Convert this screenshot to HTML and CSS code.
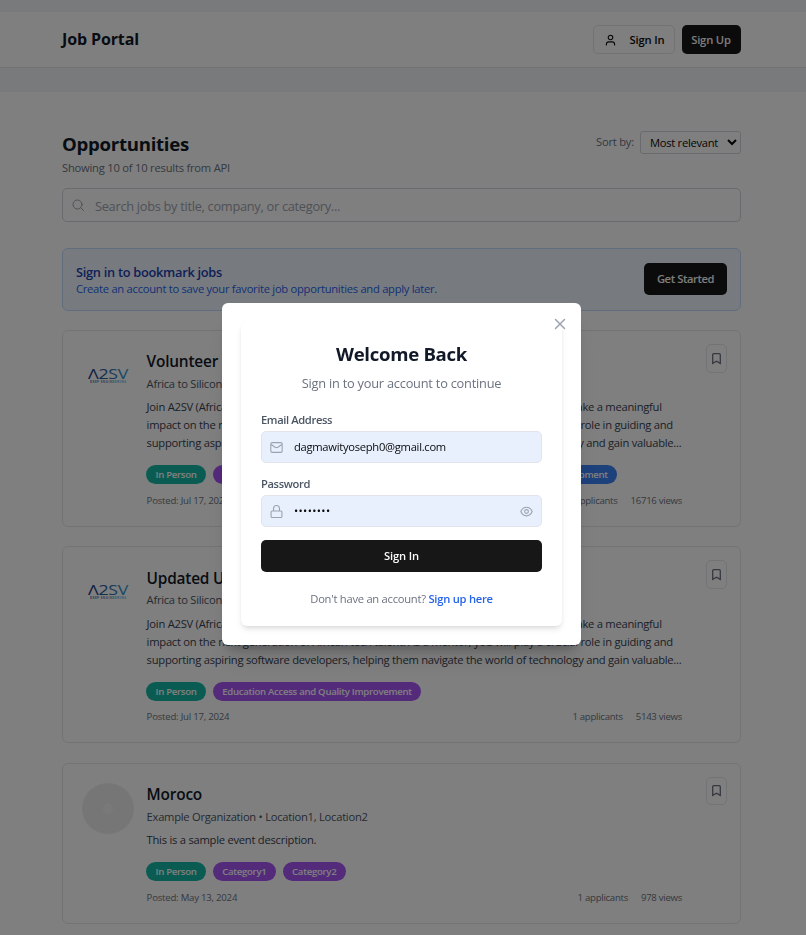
FILE: index.html
```html
<!DOCTYPE html>
<html lang="en">
<head>
<meta charset="utf-8">
<title>Job Portal</title>
<link rel="stylesheet" href="styles.css">
</head>
<body>
<svg class="sprite" aria-hidden="true">
  <defs>
    <linearGradient id="logo-fill" x1="0" y1="0" x2="1" y2="0">
      <stop offset="0" stop-color="#1e2f78"/>
      <stop offset="1" stop-color="#38a4d8"/>
    </linearGradient>
    <symbol id="bookmark" viewBox="0 0 24 24">
      <path d="M19 21l-7-4-7 4V5a2 2 0 0 1 2-2h10a2 2 0 0 1 2 2z" fill="none" stroke="currentColor" stroke-width="2.4"/>
    </symbol>
    <symbol id="a2sv" viewBox="0 0 52 52">
      <g fill="url(#logo-fill)" font-family="Open Sans, sans-serif">
        <text x="6" y="29" font-size="14.500" font-weight="500" textLength="40" lengthAdjust="spacingAndGlyphs">Λ2SV</text>
        <text x="8" y="33.200" font-size="3" font-weight="700" opacity=".75" textLength="36">DEEP ENGINEERING</text>
      </g>
    </symbol>
  </defs>
</svg>

<div class="page">
  <header class="header">
    <div class="brand">Job Portal</div>
    <nav class="nav">
      <button class="btn btn-outline">
        <svg class="icon-user" viewBox="0 0 24 24" fill="none" stroke="currentColor" stroke-width="2.4" stroke-linecap="round"><path d="M21 23v-2a5 5 0 0 0-5-5H8a5 5 0 0 0-5 5v2"/><circle cx="12" cy="6.500" r="5"/></svg>
        <span>Sign In</span>
      </button>
      <button class="btn btn-dark btn-signup">Sign Up</button>
    </nav>
  </header>

  <main class="main">
    <div class="heading">
      <div>
        <h1>Opportunities</h1>
        <p class="count">Showing 10 of 10 results from API</p>
      </div>
      <label class="sort">Sort by: <select><option>Most relevant</option></select></label>
    </div>

    <div class="search">
      <svg viewBox="0 0 24 24" fill="none" stroke="currentColor" stroke-width="2" stroke-linecap="round"><circle cx="11" cy="11" r="9"/><path d="M23 23l-5.400-5.400"/></svg>
      <input type="text" placeholder="Search jobs by title, company, or category...">
    </div>

    <section class="banner">
      <div class="banner-text">
        <h2>Sign in to bookmark jobs</h2>
        <p>Create an account to save your favorite job opportunities and apply later.</p>
      </div>
      <button class="btn btn-dark btn-large">Get Started</button>
    </section>

    <section class="jobs">
      <article class="card">
        <svg class="avatar"><use href="#a2sv"/></svg>
        <div class="card-body">
          <h3>Volunteer Software Mentor</h3>
          <p class="company">Africa to Silicon Valley • Addis Ababa</p>
          <p class="desc"><span>Join A2SV (Africa to Silicon Valley) as a mentor for all students, share experience, and make a meaningful</span><span>impact on the next generation of African tech talent. As a mentor, you will play a crucial role in guiding and</span><span>supporting aspiring software developers, helping them navigate the world of technology and gain valuable...</span></p>
          <div class="tags"><span class="tag teal">In Person</span><span class="tag purple">Education Access and Quality Improvement</span><span class="tag blue">Workforce and Economic Development</span></div>
          <div class="meta"><span>Posted: Jul 17, 2024</span><span class="stats"><span>1 applicants</span><span>16716 views</span></span></div>
        </div>
        <button class="save" aria-label="Bookmark"><svg><use href="#bookmark"/></svg></button>
      </article>

      <article class="card">
        <svg class="avatar"><use href="#a2sv"/></svg>
        <div class="card-body">
          <h3>Updated Updated Mentor</h3>
          <p class="company">Africa to Silicon Valley • Addis Ababa</p>
          <p class="desc"><span>Join A2SV (Africa to Silicon Valley) as a mentor for all students, share experience, and make a meaningful</span><span>impact on the next generation of African tech talent. As a mentor, you will play a crucial role in guiding and</span><span>supporting aspiring software developers, helping them navigate the world of technology and gain valuable...</span></p>
          <div class="tags"><span class="tag teal">In Person</span><span class="tag purple">Education Access and Quality Improvement</span></div>
          <div class="meta"><span>Posted: Jul 17, 2024</span><span class="stats"><span>1 applicants</span><span>5143 views</span></span></div>
        </div>
        <button class="save" aria-label="Bookmark"><svg><use href="#bookmark"/></svg></button>
      </article>

      <article class="card">
        <div class="avatar avatar-empty"></div>
        <div class="card-body">
          <h3>Moroco</h3>
          <p class="company">Example Organization • Location1, Location2</p>
          <p class="desc"><span>This is a sample event description.</span></p>
          <div class="tags"><span class="tag teal">In Person</span><span class="tag purple">Category1</span><span class="tag purple">Category2</span></div>
          <div class="meta"><span>Posted: May 13, 2024</span><span class="stats"><span>1 applicants</span><span>978 views</span></span></div>
        </div>
        <button class="save" aria-label="Bookmark"><svg><use href="#bookmark"/></svg></button>
      </article>
    </section>
  </main>
</div>

<div class="overlay">
  <div class="modal" role="dialog" aria-label="Welcome Back">
    <button class="close" aria-label="Close"><svg viewBox="0 0 12 12" fill="none" stroke="currentColor" stroke-width="1.5" stroke-linecap="round"><path d="M1.500 1.500l9 9M10.500 1.500l-9 9"/></svg></button>
    <form class="signin">
      <h2>Welcome Back</h2>
      <p class="sub">Sign in to your account to continue</p>
      <label class="label" for="email">Email Address</label>
      <div class="field">
        <svg viewBox="0 0 24 24" fill="none" stroke="currentColor" stroke-width="2" stroke-linejoin="round"><rect x="1.5" y="3" width="21" height="18" rx="2.5"/><path d="M2 6.500l7.500 5q2.500 1.500 5 0l7.500-5"/></svg>
        <input id="email" type="text" value="dagmawityoseph0@gmail.com">
      </div>
      <label class="label" for="password">Password</label>
      <div class="field">
        <svg viewBox="0 0 24 24" fill="none" stroke="currentColor" stroke-width="2"><rect x="2" y="11" width="20" height="12" rx="2"/><path d="M6.5 11V6.5a5.5 5.5 0 0 1 11 0V11"/></svg>
        <input id="password" class="secret" type="text" value="••••••••">
        <svg viewBox="0 0 24 24" fill="none" stroke="currentColor" stroke-width="2"><path d="M1.5 12S5 4 12 4s10.500 8 10.500 8S19 20 12 20 1.500 12 1.500 12z"/><circle cx="12" cy="12" r="3.500"/></svg>
      </div>
      <button type="button" class="btn btn-dark submit">Sign In</button>
      <p class="switch">Don't have an account? <a>Sign up here</a></p>
    </form>
  </div>
</div>
</body>
</html>
```
FILE: styles.css
```css
* { box-sizing: border-box; margin: 0; padding: 0; }
html, body { height: 935px; overflow: hidden; }
body {
  font-family: "Open Sans", "Noto Sans", sans-serif;
  font-size: 11.2px;
  line-height: 16px;
  letter-spacing: -.25px;
  color: #0a0a0a;
  background: #f1f5f9;
}
button, input, select { font: inherit; letter-spacing: inherit; color: inherit; }
.sprite { position: absolute; width: 0; height: 0; }
.page { height: 935px; padding-top: 12px; overflow: hidden; }

.header {
  display: flex; align-items: center; justify-content: space-between;
  height: 56px; padding: 0 65px 0 62px;
  background: #fff; border-bottom: 1px solid #e5e7eb;
}
.brand { padding-bottom: 2px; font-size: 16px; font-weight: 700; line-height: 24px; letter-spacing: -.12px; color: #111827; }
.nav { display: flex; gap: 7px; }
.btn {
  display: flex; align-items: center; justify-content: center;
  height: 29px; border: 0; border-radius: 5px;
  font-weight: 600; letter-spacing: -.15px;
}
.btn-outline { width: 82px; gap: 14px; padding-left: 1px; background: #fff; border: 1px solid #e5e5e5; }
.btn-dark { background: #171717; color: #fafafa; }
.btn-signup { width: 59px; padding-right: 1px; }
.btn-large { width: 83px; height: 32px; letter-spacing: -.4px; }
.icon-user { width: 11px; height: 12px; }

.main { margin-top: 24px; height: 860px; padding: 39.4px 65px 0 62px; background: #fff; }
.heading { display: flex; justify-content: space-between; }
h1 { font-size: 18.6px; line-height: 26px; letter-spacing: -.27px; color: #111827; }
.count { margin-top: 2.6px; letter-spacing: -.22px; color: #6b7280; }
.sort { display: flex; align-items: flex-start; gap: 6px; line-height: 22px; letter-spacing: -.21px; color: #6b7280; }
.sort select {
  width: 101px; height: 23px; padding: 0 0 0 5px;
  border: 1px solid #d1d5db; border-radius: 3px; background: #fff; color: #0a0a0a;
  letter-spacing: -.28px;
}

.search {
  display: flex; align-items: center; gap: 11px;
  height: 34px; margin-top: 12px; padding: 0 9px;
  border: 1px solid #d1d5db; border-radius: 5px; color: #9ca3af;
}
.search svg { width: 12px; height: 12px; }
.search input { flex: 1; border: 0; background: none; font-size: 12.8px; letter-spacing: -.29px; line-height: 20px; padding-top: 2px; }
.search input::placeholder { color: #9ca3af; opacity: 1; }

.banner {
  display: flex; align-items: center; justify-content: space-between;
  height: 63px; margin-top: 26px; padding: 0 13px;
  background: #eff6ff; border: 1px solid #bfdbfe; border-radius: 6px;
}
.banner-text { padding-top: 2px; }
.banner h2 { font-size: 12.8px; font-weight: 600; line-height: 18px; letter-spacing: -.28px; color: #1e40af; }
.banner p { letter-spacing: -.268px; color: #2563eb; }

.jobs { display: flex; flex-direction: column; gap: 19.2px; margin-top: 19px; }
.card {
  display: flex; padding: 19px 13px 19px 19px;
  border: 1px solid #e5e7eb; border-radius: 6px; background: #fff;
}
.avatar { flex: none; width: 52px; height: 52px; margin-right: 12.6px; border-radius: 50%; }
.avatar-empty { height: 51px; background: radial-gradient(circle, #f3f3f3 0 4px, #ededed 6px); }
.card-body { flex: 1; min-width: 0; padding-top: .2px; }
h3 { font-size: 15.4px; font-weight: 600; line-height: 24px; letter-spacing: -.2px; color: #111827; white-space: nowrap; }
.company { margin-top: 1.8px; letter-spacing: -.263px; color: #4b5563; white-space: nowrap; }
.desc { margin-top: 6.2px; line-height: 18px; letter-spacing: -.248px; color: #374151; }
.desc span { display: block; white-space: nowrap; }
.tags { display: flex; gap: 7px; margin: 13px 0 0 -.4px; }
.tag {
  height: 19.2px; padding: 0 9.3px; border-radius: 10px;
  font-size: 9.6px; font-weight: 600; line-height: 19px; letter-spacing: -.29px;
  color: #fff; white-space: nowrap;
}
.teal { background: #14b8a6; }
.purple { background: #a855f7; }
.blue { background: #3b82f6; }
.meta { display: flex; justify-content: space-between; margin: 9.8px 0 -1px; font-size: 9.6px; line-height: 14px; letter-spacing: -.22px; color: #6b7280; }
.stats { display: flex; gap: 13px; letter-spacing: -.28px; }
.save {
  display: flex; align-items: center; justify-content: center; flex: none;
  width: 21px; height: 28.6px; margin: -6px 0 0 24px;
  background: #fff; border: 1px solid #e5e7eb; border-radius: 5px; color: #6b7280;
}
.save svg { width: 13px; height: 13px; flex: none; }

.overlay {
  position: fixed; inset: 0;
  display: flex; align-items: center; justify-content: center;
  padding: 13px 3px 0 0; background: rgba(0, 0, 0, .5);
}
.modal {
  position: relative; width: 359px; padding: 19px;
  background: #fff; border-radius: 6px;
  box-shadow: 0 20px 25px -5px rgba(0, 0, 0, .1), 0 8px 10px -6px rgba(0, 0, 0, .3);
}
.close { position: absolute; top: 15px; right: 15px; display: flex; border: 0; background: none; color: #9ca3af; }
.close svg { width: 12px; height: 12px; }
.signin {
  padding: 18.500px 20px 19px; border-radius: 6px; background: #fff;
  box-shadow: 0 4px 6px -1px rgba(0, 0, 0, .1), 0 2px 4px -2px rgba(0, 0, 0, .1);
}
.signin h2 { font-size: 18.6px; line-height: 26px; letter-spacing: -.3px; text-align: center; color: #111827; }
.sub { margin-top: 6px; font-size: 12.8px; line-height: 20px; letter-spacing: -.228px; text-align: center; color: #6b7280; }
.label { display: block; margin: 13px 0 3px; font-weight: 600; letter-spacing: -.38px; color: #4b5563; }
.sub + .label { margin-top: 19.500px; }
.field {
  display: flex; align-items: center; gap: 11px;
  height: 32px; padding: 0 8px;
  background: #e8f0fe; border: 1px solid #e2e4ea; border-radius: 5px; color: #9ca3af;
}
.field svg { flex: none; width: 13px; height: 13px; }
.field input { flex: 1; min-width: 0; border: 0; background: none; color: #0a0a0a; letter-spacing: -.28px; }
.field .secret { letter-spacing: .35px; }
.submit { width: 100%; height: 32px; margin-top: 13px; }
.switch { margin-top: 19px; letter-spacing: -.254px; text-align: center; color: #6b7280; }
.switch a { font-weight: 600; color: #2563eb; }
```
